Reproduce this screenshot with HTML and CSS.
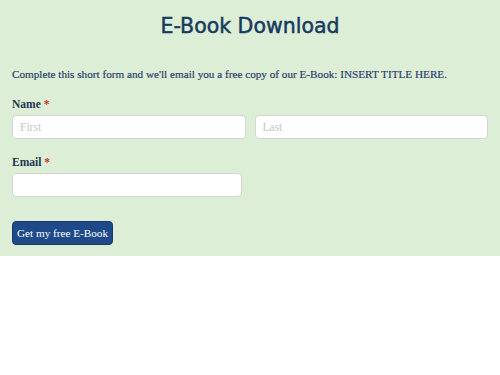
FILE: index.html
```html
<!DOCTYPE html>
<html lang="en">
<head>
    <meta charset="UTF-8">
    <meta name="viewport" content="width=device-width, initial-scale=1.0">
    <title>E-Book Download</title>
    <link rel="stylesheet" href="styles.css">
</head>
<body>

    <div class="ebook-form">
        <h2>E-Book Download</h2>

        <p class="intro">Complete this short form and we'll email you a free copy of our E-Book: INSERT TITLE HERE.</p>

        <div class="field">
            <label>Name <span class="req">*</span></label>
            <div class="name-row">
                <input type="text" placeholder="First">
                <input type="text" placeholder="Last">
            </div>
        </div>

        <div class="field">
            <label for="email">Email <span class="req">*</span></label>
            <input type="email" id="email" class="email">
        </div>

        <button type="button">Get my free E-Book</button>
    </div>

</body>
</html>
```

FILE: styles.css
```css
body {
    margin: 0;
    font-family: "Liberation Serif", serif;
    background: #fff;
}
.ebook-form {
    background-color: #ddeed6;
    padding: 12px;
    height: 232px;
}
h2 {
    margin: 0;
    text-align: center;
    font-family: "DejaVu Sans", sans-serif;
    font-weight: normal;
    font-size: 20.5px;
    color: #173b5f;
    line-height: 28px;
    -webkit-text-stroke: 0.5px #173b5f;
}
.intro {
    margin: 26px 0 0 0;
    font-size: 11.2px;
    line-height: 16px;
    color: #2b3f6b;
    white-space: nowrap;
    -webkit-text-stroke: 0.2px #2b3f6b;
}
.field {
    margin-top: 14px;
}
.field + .field {
    margin-top: 15px;
}
label {
    display: block;
    font-size: 11.5px;
    font-weight: bold;
    color: #1f3350;
    margin-bottom: 3px;
    line-height: 16px;
}
.req {
    color: #d22b2b;
}
.name-row {
    display: flex;
    gap: 9px;
}
input {
    box-sizing: border-box;
    height: 24px;
    border: 1px solid #d4d4d4;
    border-radius: 4px;
    background: #fff;
    padding: 0 7px;
    font-family: "Liberation Serif", serif;
    font-size: 11.5px;
}
.name-row input {
    flex: 1;
    min-width: 0;
}
input::placeholder {
    color: #c6c6c6;
}
.email {
    width: 230px;
}
button {
    display: block;
    margin-top: 24px;
    background-color: #1f4a8a;
    color: #fff;
    border: 1px solid #173a6e;
    border-radius: 4px;
    height: 24px;
    padding: 0 4px;
    font-family: "Liberation Serif", serif;
    font-size: 11.2px;
}
```
